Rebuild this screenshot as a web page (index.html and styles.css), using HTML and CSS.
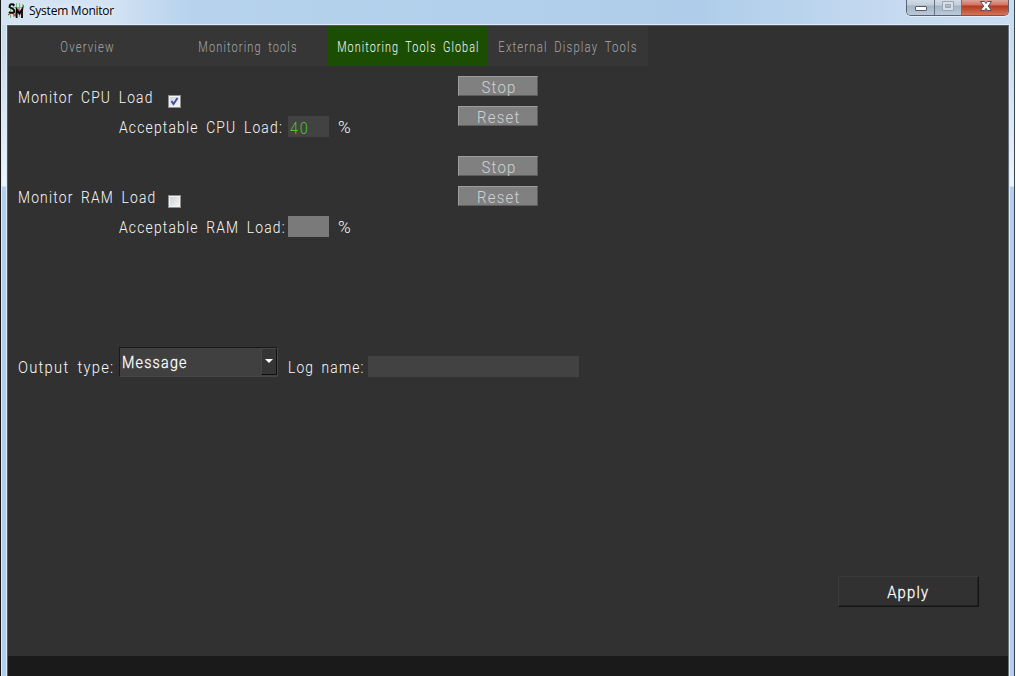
FILE: index.html
```
<!DOCTYPE html>
<html lang="en">
<head>
<meta charset="utf-8">
<title>System Monitor</title>
<link rel="stylesheet" href="styles.css">
</head>
<body>
<div class="window">
  <header class="titlebar">
    <svg class="app-icon" width="16" height="16" viewBox="0 0 16 16">
      <path d="M2.5 0v15M5.500 0v14M8.500 0v15M11.500 0v14M14.500 1v13M0 4.500h15M0 9.500h15" stroke="#76bd79" stroke-width="1" fill="none"/>
      <path d="M0 12l4-3 3 4 3-7 3 5 3-9" stroke="#d43838" stroke-width="1.300" fill="none"/>
      <path d="M6.500 2.500C4 .3 1.200 1.300 1.600 3.700c.3 2 4.800 1.600 4.800 4.300 0 2.200-3.300 2.600-5.200.8M8.700 15V6.500l2.600 4 2.700-4V15" stroke="#080808" stroke-width="1.800" fill="none"/>
    </svg>
    <h1 class="title">System Monitor</h1>
    <div class="caption-buttons">
      <button class="cap min" aria-label="Minimize"><svg width="28" height="15"><rect x="8.500" y="6.500" width="11" height="4" rx=".5" fill="#fff" stroke="#555b6b"/></svg></button>
      <button class="cap max" aria-label="Maximize"><svg width="26" height="15"><path d="M7.500 1.500h11v9h-11zM10.500 4.500v3h5v-3z" fill="#d6dde5" fill-rule="evenodd" stroke="#9aa5b1"/></svg></button>
      <button class="cap close" aria-label="Close"><svg width="46" height="15"><path d="M18.500 1.500h4l1.500 2 1.500-2h4L26.300 6l3.200 4.500h-4L24 8.400l-1.500 2.100h-4L21.700 6z" fill="#fff" stroke="#594b55"/></svg></button>
    </div>
  </header>
  <main class="client">
    <nav class="tabs">
      <a class="tab"><span class="txt">Overview</span></a>
      <a class="tab"><span class="txt mid">Monitoring tools</span></a>
      <a class="tab active"><span class="txt tight">Monitoring Tools Global</span></a>
      <a class="tab"><span class="txt">External Display Tools</span></a>
    </nav>
    <section class="monitor">
      <div class="settings">
        <label class="line"><span class="name"><span class="txt">Monitor CPU Load</span></span><span class="check"><svg width="9" height="9"><path d="M1.500 4l2 3L7.500 1" fill="none" stroke="#3a51a0" stroke-width="1.900"/></svg></span></label>
        <div class="line sub"><span class="caption"><span class="txt">Acceptable CPU Load:</span></span><span class="value"><span class="txt">40</span></span><span class="txt percent">%</span></div>
      </div>
      <div class="actions"><button class="btn"><span class="txt">Stop</span></button><button class="btn"><span class="txt">Reset</span></button></div>
    </section>
    <section class="monitor second">
      <div class="settings">
        <label class="line"><span class="name"><span class="txt">Monitor RAM Load</span></span><span class="check"></span></label>
        <div class="line sub"><span class="caption"><span class="txt">Acceptable RAM Load:</span></span><span class="value off"></span><span class="txt percent">%</span></div>
      </div>
      <div class="actions"><button class="btn"><span class="txt">Stop</span></button><button class="btn"><span class="txt">Reset</span></button></div>
    </section>
    <section class="output">
      <span class="out-label"><span class="txt">Output type:</span></span>
      <div class="select"><span class="txt">Message</span><span class="arrow"><svg width="8" height="4"><path d="M0 0h8L4 4z" fill="#fff"/></svg></span></div>
      <span class="log-label"><span class="txt">Log name:</span></span>
      <span class="log"></span>
    </section>
    <div class="footer"><button class="apply"><span class="txt">Apply</span></button></div>
    <div class="status"></div>
  </main>
</div>
</body>
</html>
```
FILE: styles.css
```
* { box-sizing: border-box; }
body { margin: 0; background: #fff; overflow: hidden; font-family: Roboto, sans-serif; }
button { margin: 0; padding: 0; border: 0; border-radius: 0; font: inherit; color: inherit; }
.window {
  width: 1015px; height: 676px; padding: 0 5px 0 6px;
  border-left: 1px solid #17191d; border-right: 1px solid #3c4650;
  background: linear-gradient(#c4d8ee 0, #cddff1 70px, #eef4fb 186px, #b3cfeb 187px, #b3cfeb 100%);
  box-shadow: inset 1px 0 #dbeaf7;
}
.titlebar {
  display: flex; height: 25px; margin: 0 -5px 0 -6px; padding-left: 7px;
  background: linear-gradient(90deg, #d5e3f3 0, #d3e3f3 110px, #b6d2ed 190px, #afcdea 700px, #c6daf0 900px, #c9dcf0);
}
.app-icon { margin-top: 3px; }
.title { margin: 3px 0 0 5px; font: 12px/16px "Open Sans", sans-serif; letter-spacing: -.24px; color: #000; text-shadow: 0 0 6px #fff; }
.caption-buttons {
  display: flex; height: 16px; margin: 0 5px 0 auto; overflow: hidden;
  border: 1px solid #59616e; border-top: 0; border-radius: 0 0 5px 5px; box-shadow: 0 1px #e2edf8;
}
.cap { height: 15px; background: linear-gradient(#d1dce8 0, #c1cedb 5px, #a4b4c5 6px, #bacada 15px); }
.cap svg { display: block; }
.cap.min { width: 28px; border-right: 1px solid #69727e; }
.cap.max { width: 27px; border-right: 1px solid #69727e; }
.cap.close { width: 46px; background: linear-gradient(#dda399 0, #cd7360 5px, #b83720 6px, #d27557 15px); }
.client {
  display: flex; flex-direction: column; width: 1002px; height: 651px;
  border: 1px solid #505962; border-bottom: 0; border-right-color: #66717c;
  box-shadow: 0 0 0 1px #dfebf6; background: #313131;
}
.txt { display: inline-block; white-space: pre; transform: scaleX(.84); transform-origin: 0 50%; letter-spacing: 1.400px; word-spacing: 3.500px; }
.tabs { display: flex; width: 640px; height: 40px; background: #363636; }
.tab { display: flex; justify-content: center; align-items: center; width: 160px; height: 40px; padding: 2px 0 0; font-size: 14px; font-weight: 300; color: #a8a8a8; }
.tab .txt { transform: scaleX(.81); transform-origin: 50% 50%; }
.tab .mid { transform: scaleX(.788); }
.tab .tight { transform: scaleX(.771); }
.tab.active { padding-left: 1px; background: #1b4d03; color: #fff; }
.monitor { display: flex; height: 61px; margin: 10px 0 0 10px; font-size: 16.500px; font-weight: 300; color: #fafafa; }
.monitor.second { margin-top: 19px; }
.settings { width: 440px; padding-top: 12px; }
.line { display: flex; height: 30px; line-height: 20px; }
.name { width: 150px; }
.check {
  display: flex; align-items: center; justify-content: center; width: 13px; height: 13px; margin-top: 7px;
  border: 1px solid #8e8f8f; background: linear-gradient(135deg, #cbcfd5, #f6f6f6); box-shadow: inset 0 0 0 1px #f4f4f4;
}
.sub { padding-left: 101px; }
.caption { width: 169px; }
.line .percent { transform: scaleX(1.04); }
.value { width: 41px; height: 21px; margin: -2px 9px 0 0; padding: 3px 0 0 2px; background: #424242; color: #4fc434; }
.value .txt { transform: scaleX(.88); letter-spacing: 2px; }
.value.off { background: #7a7a7a; }
.caption .txt { transform: scaleX(.842); }
.actions { display: flex; flex-direction: column; gap: 10px; }
.btn {
  width: 80px; height: 20px; font-size: 17px; line-height: 18px; background: #808080; color: #d2d2d2;
  border: 1px solid; border-color: #9d9d9d #5c5c5c #5c5c5c #9d9d9d;
}
.btn .txt, .apply .txt { transform-origin: 50% 50%; line-height: 19px; }
.btn .txt { transform: translate(1px, 1px) scaleX(.88); }
.second .settings { padding-top: 32px; }
.second { height: 81px; }
.output { display: flex; align-items: flex-start; height: 32px; margin: 110px 0 0 10px; font-size: 16.500px; font-weight: 300; line-height: 20px; color: #fafafa; }
.out-label { width: 101px; padding-top: 11px; }
.out-label .txt { transform: scaleX(.895); }
.log-label .txt { transform: scaleX(.835); }
.select {
  display: flex; justify-content: space-between; width: 159px; height: 30px; padding-left: 2px;
  border: 1px solid; border-color: #191919 #464646 #464646 #191919; background: #404040; color: #fff; line-height: 29px;
}
.select .txt { transform: scaleX(.865); }
.select .txt, .apply .txt { -webkit-text-stroke: .3px #fff; }
.arrow {
  display: flex; align-items: center; justify-content: center; width: 16px; height: 27px; padding-bottom: 2px;
  border: 1px solid; border-color: #474747 #111 #111 #474747; background: #353535;
}
.log-label { flex: none; width: 90px; padding: 11px 0 0 10px; }
.log { width: 211px; height: 21px; margin-top: 9px; background: #424242; }
.footer { display: flex; justify-content: flex-end; margin-top: auto; padding: 0 29px 49px 0; }
.apply {
  width: 141px; height: 31px; background: #313131; color: #fff; font-size: 17px; font-weight: 300; line-height: 28px; padding-top: 1px;
  border: 1px solid; border-color: #3b3b3b #151515 #151515 #3b3b3b; box-shadow: inset -1px -1px #222;
}
.apply .txt { transform: scaleX(.87); }
.status { height: 20px; background: #1a1a1a; }
```
